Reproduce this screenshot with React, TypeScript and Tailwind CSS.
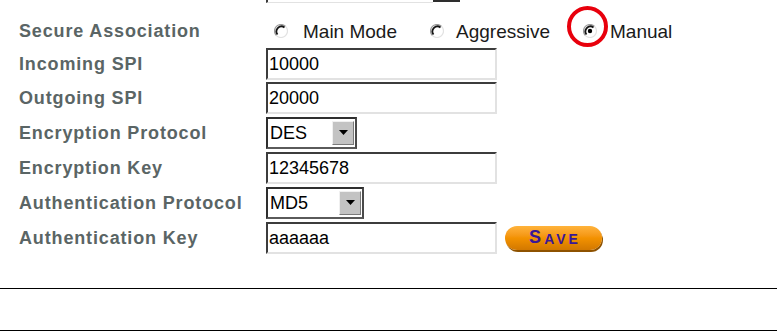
import React from "react";

const FONT = { fontFamily: '"Liberation Sans", Arial, sans-serif' };

const Radio = ({ checked }: { checked?: boolean }) => (
  <svg width="14" height="14" viewBox="0 0 14 14" className="shrink-0 block">
    <circle cx="7" cy="7" r="6" fill="#fff" />
    <path d="M11.6 2.4 A6.5 6.5 0 0 0 2.4 11.6" stroke="#9a9a9a" strokeWidth="1.2" fill="none" />
    <path d="M10.5 3.5 A5 5 0 0 0 3.5 10.5" stroke="#141414" strokeWidth="1.8" fill="none" />
    <path d="M2.4 11.6 A6.5 6.5 0 0 0 11.6 2.4" stroke="#e2e2e2" strokeWidth="1.2" fill="none" />
    {checked && <circle cx="7" cy="7" r="2.2" fill="#000" />}
  </svg>
);

const Field = ({ value }: { value: string }) => (
  <div className="w-[231px] h-[32px] border-2 border-t-[#3c3c3c] border-l-[#3c3c3c] border-r-[#e2e2e2] border-b-[#e2e2e2] bg-white flex items-center pl-[1px] text-[18px] text-black leading-none">
    {value}
  </div>
);

const Select = ({ value, width }: { value: string; width: string }) => (
  <div
    className={`${width} h-[32px] border-2 border-t-[#2e2e2e] border-l-[#2e2e2e] border-r-[#4a4a4a] border-b-[#5a5a5a] bg-white flex items-center justify-between pl-[2px] pr-[1px] text-[18px] text-black leading-none`}
  >
    <span>{value}</span>
    <div className="w-[22px] h-[24px] bg-[#c3c3c3] border border-t-[#f0f0f0] border-l-[#f0f0f0] border-r-[#7a7a7a] border-b-[#7a7a7a] flex items-center justify-center">
      <svg width="9" height="5" viewBox="0 0 9 5" className="block">
        <path d="M0 0 H9 L4.5 5 Z" fill="#000" />
      </svg>
    </div>
  </div>
);

const Label = ({ children }: { children: React.ReactNode }) => (
  <div className="w-[247px] shrink-0 text-[18px] font-bold text-[#5a6565] tracking-[0.85px] leading-none whitespace-nowrap">
    {children}
  </div>
);

export default function App() {
  return (
    <div className="w-[777px] h-[331px] bg-white overflow-hidden" style={FONT}>
      {/* partial element at top */}
      <div className="pl-[266px] h-[3px] flex">
        <div className="w-[167px] h-[3px] border-l-2 border-l-[#3c3c3c] border-b border-b-[#e2e2e2]" />
        <div className="w-[27px] h-[2px] bg-[#2e2e2e]" />
      </div>

      <div className="pl-[19px] mt-[12px] flex flex-col">
        <div className="h-[32px] flex items-center">
          <Label>Secure Association</Label>
          <div className="flex items-center text-[19px] text-[#1a1a1a] leading-none pl-[8px]">
            <Radio />
            <span className="ml-[15px]">Main Mode</span>
            <span className="ml-[33px]">
              <Radio />
            </span>
            <span className="ml-[12px]">Aggressive</span>
            <span className="ml-[33px] relative">
              <Radio checked />
              <span className="absolute left-[-16px] top-[-18px] w-[41px] h-[41px] rounded-full border-[4px] border-[#e8000c]" />
            </span>
            <span className="ml-[13px]">Manual</span>
          </div>
        </div>

        <div className="h-[34px] flex items-center">
          <Label>Incoming SPI</Label>
          <Field value="10000" />
        </div>
        <div className="h-[34px] flex items-center">
          <Label>Outgoing SPI</Label>
          <Field value="20000" />
        </div>
        <div className="h-[35px] flex items-center">
          <Label>Encryption Protocol</Label>
          <Select value="DES" width="w-[91px]" />
        </div>
        <div className="h-[35px] flex items-center">
          <Label>Encryption Key</Label>
          <Field value="12345678" />
        </div>
        <div className="h-[35px] flex items-center">
          <Label>Authentication Protocol</Label>
          <Select value="MD5" width="w-[98px]" />
        </div>
        <div className="h-[35px] flex items-center">
          <Label>Authentication Key</Label>
          <Field value="aaaaaa" />
          <button className="ml-[8px] w-[97px] h-[24px] rounded-full bg-gradient-to-b from-[#ffb33a] via-[#f39200] to-[#d27800] shadow-[1px_2px_0_#8e5200] flex items-end justify-center pb-[4px] pl-[3px] text-[#3a1896] font-black leading-none tracking-[3px]">
            <span className="text-[18px] leading-none">S</span>
            <span className="text-[14px] leading-none">AVE</span>
          </button>
        </div>
      </div>

      <div className="mt-[33px] h-px bg-black w-full" />
      <div className="mt-[41px] h-px bg-black w-full" />
    </div>
  );
}
